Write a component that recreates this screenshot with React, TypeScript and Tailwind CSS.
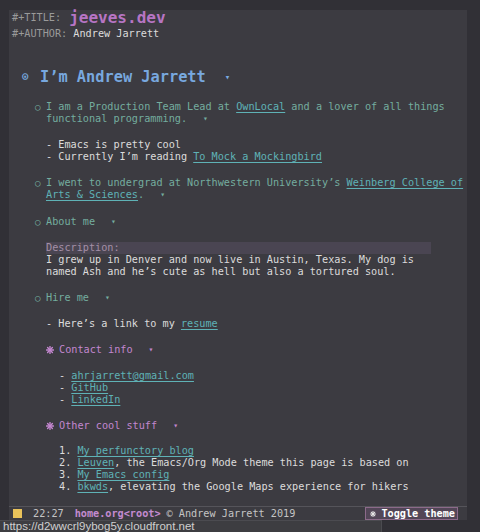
const mono = { fontFamily: '"DejaVu Sans Mono", "Liberation Mono", monospace' };

function Caret({ className = '' }: { className?: string }) {
  return <span className={`text-[8px] align-middle ${className}`}>▾</span>;
}

function Link({ children }: { children: React.ReactNode }) {
  return <span className="text-[#5fb2b6] underline underline-offset-[1.5px] decoration-1">{children}</span>;
}

function Star({ color = '#c387cf', size = 8 }: { color?: string; size?: number }) {
  return (
    <svg width={size} height={size} viewBox="0 0 8 8" className="shrink-0">
      <g stroke={color} strokeWidth="1.4" strokeLinecap="round">
        <line x1="4" y1="0.6" x2="4" y2="7.4" />
        <line x1="0.6" y1="4" x2="7.4" y2="4" />
        <line x1="1.6" y1="1.6" x2="6.4" y2="6.4" />
        <line x1="6.4" y1="1.6" x2="1.6" y2="6.4" />
      </g>
    </svg>
  );
}

function L2({ children }: { children: React.ReactNode }) {
  return (
    <div className="flex text-[#74ad9f] whitespace-nowrap">
      <span className="w-[12px] shrink-0 text-[9px] leading-[12px] pl-[1px]">○</span>
      <div>{children}</div>
    </div>
  );
}

function L3({ children }: { children: React.ReactNode }) {
  return (
    <div className="flex text-[#c387cf] items-center">
      <span className="w-[13px] shrink-0 flex items-center">
        <Star />
      </span>
      <div>{children}</div>
    </div>
  );
}

export default function App() {
  return (
    <div className="h-[532px] w-[480px] bg-[#313036] relative overflow-hidden" style={mono}>
      <div className="ml-[9px] mt-[10px] w-[458px] h-[510px] bg-[#3c3b41] flex flex-col text-[10.2px] leading-[12px] text-[#dcdcdc] whitespace-nowrap">
        {/* header */}
        <div className="pl-[3px] flex items-center h-[16px] text-[#9a9a9a]">
          <span>#+TITLE:&nbsp;</span>
          <span className="text-[16px] font-bold text-[#b775c4] ml-[2px]">jeeves.dev</span>
        </div>
        <div className="pl-[3px] mt-[2px] text-[#9a9a9a]">
          #+AUTHOR: <span className="text-[#dcdcdc]">Andrew Jarrett</span>
        </div>

        <div className="mt-[28px] pl-[13px] flex items-center h-[18px] text-[#78a8df]">
          <span className="w-[18px] text-[11px] font-bold">⊙</span>
          <span className="text-[15.3px] font-bold">I’m Andrew Jarrett</span>
          <Caret className="ml-[19px] text-[9px]" />
        </div>

        <div className="pl-[25px] mt-[15px]">
          <L2>
            <div>
              I am a Production Team Lead at <Link>OwnLocal</Link> and a lover of all things
            </div>
            <div>
              functional programming.
              <Caret className="ml-[16px]" />
            </div>
          </L2>
          <div className="pl-[12px] mt-[14px]">
            <div>- Emacs is pretty cool</div>
            <div>- Currently I’m reading <Link>To Mock a Mockingbird</Link></div>
          </div>

          <div className="mt-[14px]">
            <L2>
              <div>
                I went to undergrad at Northwestern University’s <Link>Weinberg College of</Link>
              </div>
              <div>
                <Link>Arts &amp; Sciences</Link>.
                <Caret className="ml-[16px]" />
              </div>
            </L2>
          </div>

          <div className="mt-[15px]">
            <L2>
              About me
              <Caret className="ml-[16px]" />
            </L2>
          </div>
          <div className="pl-[12px] mt-[14px]">
            <div className="w-[385px] bg-[#4a4552] text-[#a48fa6]">Description:</div>
            <div>I grew up in Denver and now live in Austin, Texas. My dog is</div>
            <div>named Ash and he’s cute as hell but also a tortured soul.</div>
          </div>

          <div className="mt-[14px]">
            <L2>
              Hire me
              <Caret className="ml-[16px]" />
            </L2>
          </div>
          <div className="pl-[12px] mt-[14px]">
            <div>- Here’s a link to my <Link>resume</Link></div>

            <div className="mt-[14px]">
              <L3>
                Contact info
                <Caret className="ml-[16px]" />
              </L3>
            </div>
            <div className="pl-[13px] mt-[14px]">
              <div>- <Link>ahrjarrett@gmail.com</Link></div>
              <div>- <Link>GitHub</Link></div>
              <div>- <Link>LinkedIn</Link></div>
            </div>

            <div className="mt-[14px]">
              <L3>
                Other cool stuff
                <Caret className="ml-[16px]" />
              </L3>
            </div>
            <div className="pl-[13px] mt-[13px]">
              <div>1. <Link>My perfunctory blog</Link></div>
              <div>2. <Link>Leuven</Link>, the Emacs/Org Mode theme this page is based on</div>
              <div>3. <Link>My Emacs config</Link></div>
              <div>4. <Link>bkwds</Link>, elevating the Google Maps experience for hikers</div>
            </div>
          </div>
        </div>

        {/* mode line */}
        <div className="mt-auto h-[14px] border-t border-[#55545a] flex items-center text-[#c4c4c4]">
          <span className="ml-[4px] w-[9px] h-[9px] bg-[#e9c25a]" />
          <span className="ml-[11px]">22:27</span>
          <span className="ml-[11px] font-bold text-[#c48bd0]">home.org&lt;root&gt;</span>
          <span className="ml-[6px]">© Andrew Jarrett 2019</span>
          <span className="ml-auto mr-[9px] h-[13px] pl-[4px] pr-[2px] flex items-center border border-[#8c6a8a] bg-[#524657] text-white font-bold">
            <span className="mr-[5px] flex items-center">
              <Star color="#e8e8e8" size={6} />
            </span>
            Toggle theme
          </span>
        </div>
      </div>

      {/* status bubble */}
      <div
        className="absolute left-0 bottom-0 w-[382px] h-[12px] bg-[#3d3d41] border-t border-r border-[#4b4b50] text-[#cfcfcf] text-[11.5px] leading-[11px] pl-[3px]"
        style={{ fontFamily: '"Liberation Sans", Arial, sans-serif' }}
      >
        https://d2wwcrl9ybog5y.cloudfront.net
      </div>
    </div>
  );
}
